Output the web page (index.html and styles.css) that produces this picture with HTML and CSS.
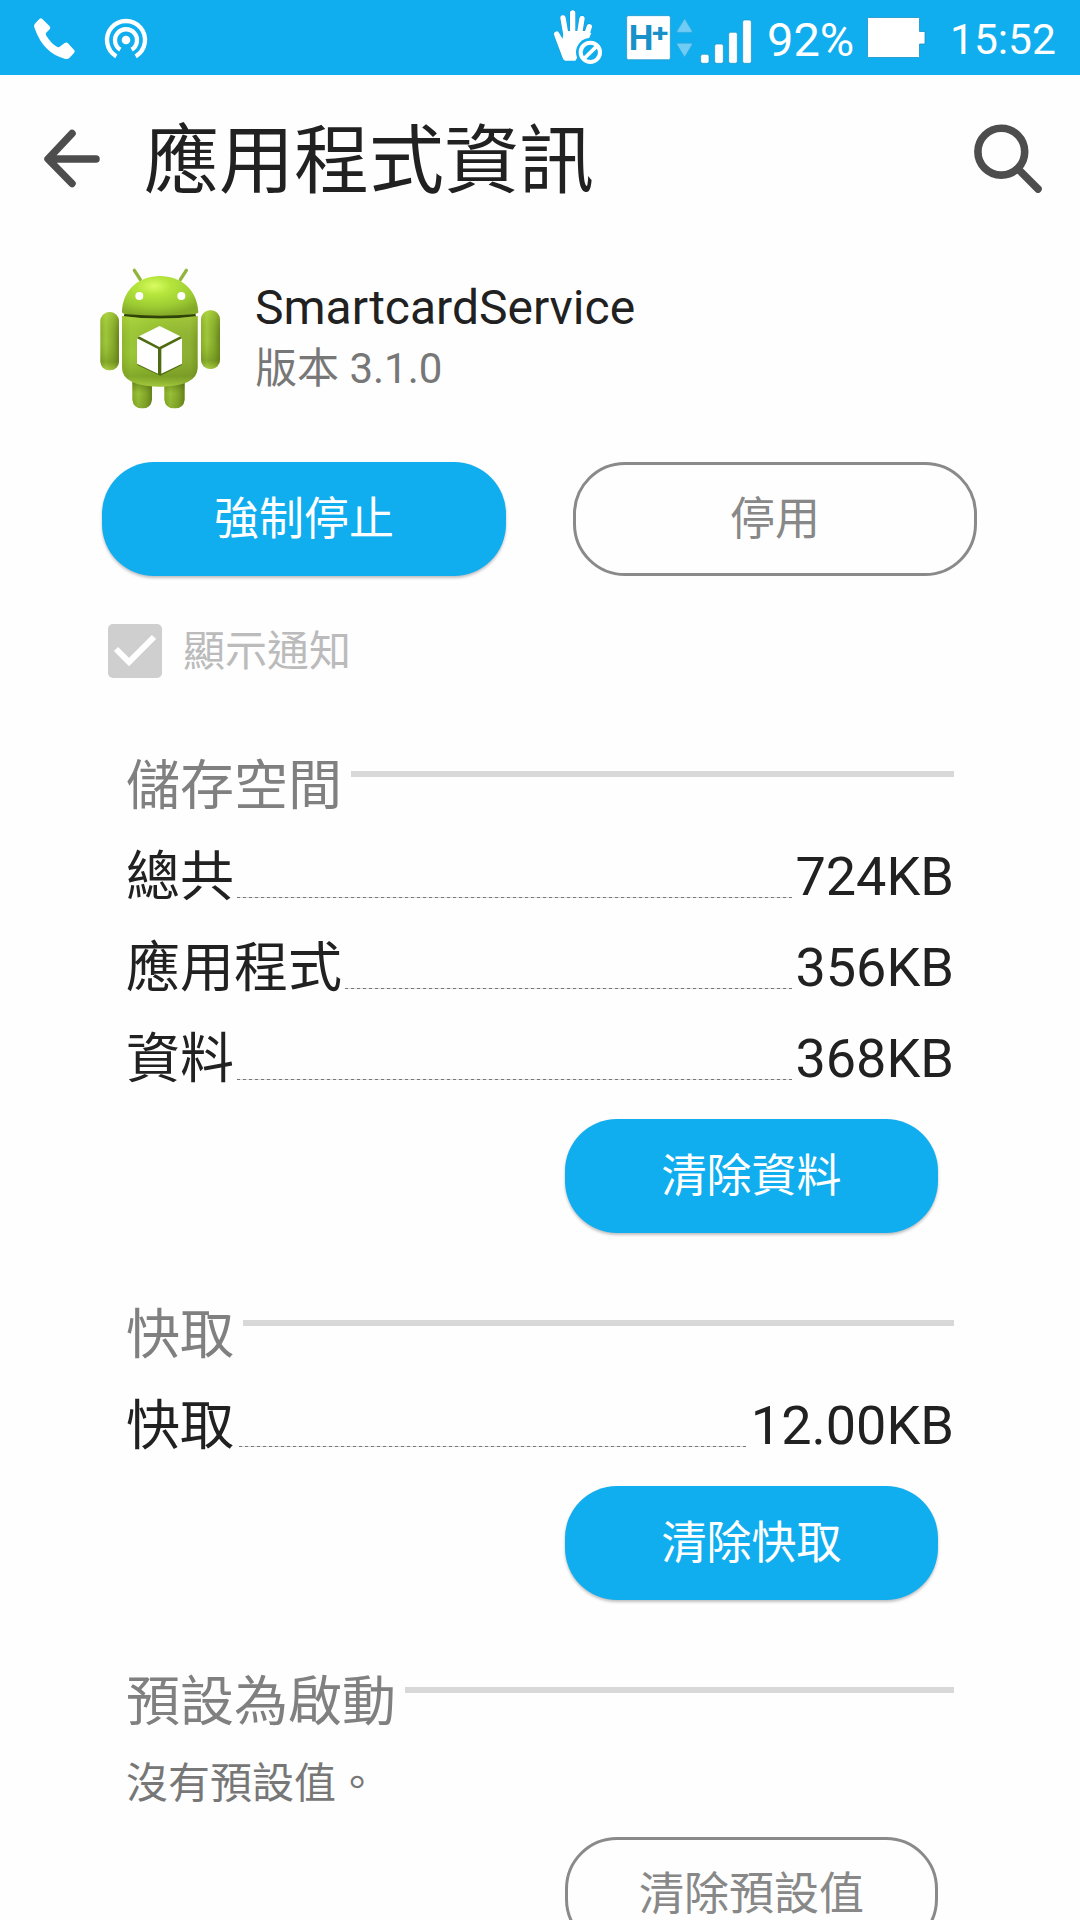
FILE: index.html
```html
<!DOCTYPE html>
<html lang="zh-Hant">
<head>
    <meta charset="UTF-8">
    <meta name="viewport" content="width=device-width, initial-scale=1.0">
    <title>應用程式資訊</title>
    <link rel="stylesheet" href="styles.css">
</head>
<body>
    <div class="statusbar">
        <svg class="phone" viewBox="96 48 135 135">
            <path fill="#fff" d="M118 57Q122 53 127 57L149 79Q153 84 149 88L138 99Q136 103 139 107Q154 131 172 141Q177 143 181 139L194 129Q200 126 204 130L223 151Q226 155 222 159L208 174Q203 179 194 176Q130 160 104 85Q100 77 104 72Z"/>
        </svg>
        <svg class="hotspot" viewBox="309 48 138 135">
            <g fill="none" stroke="#fff" stroke-width="13">
                <path d="M349 169A57 57 0 1 1 407 169"/>
                <path d="M361 149A33 33 0 1 1 395 149"/>
            </g>
            <circle cx="378" cy="120" r="13" fill="#fff"/>
        </svg>
        <svg class="signals" viewBox="36 20 603 180">
            <!-- hand -->
            <g fill="none" stroke="#1791c7" stroke-width="19" stroke-linecap="round" stroke-linejoin="round" opacity=".75">
                <path d="M50 101L75 170H105L125 125L147 79M69 53L79 110M98 38V110M126 55L117 110"/>
            </g>
            <g fill="none" stroke="#fff" stroke-width="16" stroke-linecap="round">
                <path d="M50 101L72 140M69 53L79 110M98 38V110M126 55L117 110M148 79L134 120"/>
            </g>
            <path fill="#fff" d="M57 101L67 116L74 92H136L154 98L140 130L106 181H76Q70 180 68 173L43 106Z"/>
            <circle cx="151" cy="156" r="43" fill="#10aeef"/>
            <circle cx="151" cy="156" r="29" fill="#10aeef" stroke="#fff" stroke-width="12"/>
            <path d="M134 173L169 139" stroke="#fff" stroke-width="11"/>
            <!-- network type -->
            <rect x="260" y="46" width="131" height="132" rx="5" fill="#fff" stroke="#1791c7" stroke-width="2"/>
            <text class="net" x="266" y="149" textLength="74" lengthAdjust="spacingAndGlyphs">H</text>
            <text class="net plus" x="336" y="125" textLength="49" lengthAdjust="spacingAndGlyphs">+</text>
            <path fill="#6fcdf5" stroke="#36a9dc" stroke-width="2" d="M434 55L456 92V96H411V92ZM434 170L456 133V129H411V133Z"/>
            <g fill="#fff" stroke="#1791c7" stroke-width="2">
                <rect x="482" y="162" width="25" height="27" rx="6"/>
                <rect x="524" y="131" width="26" height="58" rx="6"/>
                <rect x="566" y="96" width="26" height="93" rx="6"/>
                <rect x="608" y="59" width="26" height="130" rx="6"/>
            </g>
        </svg>
        <span class="percent">92%</span>
        <svg class="battery" viewBox="0 0 60 42">
            <path fill="#fff" stroke="#1791c7" stroke-width=".8" d="M1.5 .5H51.5Q52.5 .5 52.5 1.5V14.5H58V27H52.5V39.5Q52.5 40.5 51.5 40.5H1.5Q.5 40.5 .5 39.5V1.5Q.5 .5 1.5 .5Z"/>
        </svg>
        <span class="time">15:52</span>
    </div>

    <div class="header">
        <svg class="back" viewBox="0 0 60 60">
            <path fill="none" stroke="#4d4d4d" stroke-width="7.5" stroke-linecap="round" stroke-linejoin="round" d="M30 5.5L6 31L30 55.5M7 31H54"/>
        </svg>
        <h1>應用程式資訊</h1>
        <svg class="search" viewBox="0 0 70 70">
            <g fill="none" stroke="#4d4d4d" stroke-width="7.6" stroke-linecap="round">
                <circle cx="28.3" cy="28.7" r="23.4"/>
                <path d="M45 46L65 66"/>
            </g>
        </svg>
    </div>

    <div class="app">
        <svg class="robot" viewBox="0 0 450 495">
            <defs>
                <linearGradient id="body" x1="0" x2="1" y1="0" y2="0">
                    <stop offset="0" stop-color="#8fb52c"/>
                    <stop offset=".12" stop-color="#9cc739"/>
                    <stop offset=".5" stop-color="#90b92f"/>
                    <stop offset=".9" stop-color="#8db035"/>
                    <stop offset="1" stop-color="#789a22"/>
                </linearGradient>
                <linearGradient id="shade" x1="0" x2="0" y1="0" y2="1">
                    <stop offset="0" stop-color="#c8f04a" stop-opacity=".35"/>
                    <stop offset=".5" stop-color="#7fa51f" stop-opacity="0"/>
                    <stop offset=".85" stop-color="#5d7d14" stop-opacity=".4"/>
                    <stop offset="1" stop-color="#b7d84a" stop-opacity=".5"/>
                </linearGradient>
                <radialGradient id="head" cx=".42" cy=".25" r=".75">
                    <stop offset="0" stop-color="#d9fb62"/>
                    <stop offset=".3" stop-color="#b5e53c"/>
                    <stop offset=".7" stop-color="#9dcc33"/>
                    <stop offset="1" stop-color="#84ab28"/>
                </radialGradient>
                <linearGradient id="limb" x1="0" x2="1" y1="0" y2="0">
                    <stop offset="0" stop-color="#88ae2a"/>
                    <stop offset=".3" stop-color="#a0c83c"/>
                    <stop offset=".7" stop-color="#86a92c"/>
                    <stop offset="1" stop-color="#64831a"/>
                </linearGradient>
                <linearGradient id="leg" x1="0" x2="0" y1="0" y2="1">
                    <stop offset="0" stop-color="#3e5509" stop-opacity=".7"/>
                    <stop offset=".5" stop-color="#5d7d14" stop-opacity=".1"/>
                    <stop offset="1" stop-color="#5d7d14" stop-opacity=".3"/>
                </linearGradient>
            </defs>
            <path d="M148 46L166 74M304 46L286 74" stroke="#91b53a" stroke-width="10" stroke-linecap="round"/>
            <path fill="url(#limb)" d="M142 370H201V434Q198 460 172 460Q145 460 142 434Z"/>
            <path fill="url(#leg)" d="M142 370H201V434Q198 460 172 460Q145 460 142 434Z"/>
            <path fill="url(#limb)" d="M238 370H299V434Q296 460 269 460Q241 460 238 434Z"/>
            <path fill="url(#leg)" d="M238 370H299V434Q296 460 269 460Q241 460 238 434Z"/>
            <rect x="46" y="171" width="56" height="175" rx="27" fill="url(#limb)"/>
            <rect x="46" y="171" width="56" height="175" rx="27" fill="url(#shade)"/>
            <rect x="348" y="166" width="57" height="176" rx="27" fill="url(#limb)"/>
            <rect x="348" y="166" width="57" height="176" rx="27" fill="url(#shade)"/>
            <path fill="#2f4207" d="M119 174H331L334 192Q225 202 115 190Z"/>
            <path fill="url(#body)" d="M111 183Q225 198 338 183V338Q337 393 225 395Q112 393 111 338Z"/>
            <path fill="url(#shade)" d="M111 183Q225 198 338 183V338Q337 393 225 395Q112 393 111 338Z"/>
            <path fill="url(#head)" d="M111 172C112 105 162 63 225 63C288 63 338 105 340 172Q338 177 325 178Q225 186 125 178Q112 177 111 172Z"/>
            <circle cx="163" cy="123" r="12" fill="#fff"/>
            <circle cx="289" cy="123" r="12" fill="#fff"/>
            <path fill="#4e6b12" d="M222 217L290 248V330L226 362L157 330V248Z"/>
            <g fill="#fff">
                <path d="M224 213L286 244L223 276L162 244Z"/>
                <path d="M156 250L219 282V356L156 326Z"/>
                <path d="M229 282L291 250V326L229 356Z"/>
            </g>
        </svg>
        <div class="app-text">
            <div class="name">SmartcardService</div>
            <div class="version">版本 3.1.0</div>
        </div>
    </div>

    <div class="actions">
        <button class="btn primary">強制停止</button>
        <button class="btn outline">停用</button>
    </div>

    <div class="notify">
        <svg class="check" viewBox="0 0 54 54">
            <rect width="54" height="54" rx="5" fill="#cfcfcf"/>
            <path fill="none" stroke="#fff" stroke-width="6" d="M8 25L21 38L46 13"/>
        </svg>
        <span>顯示通知</span>
    </div>

    <div class="section">
        <div class="row title"><span class="label">儲存空間</span><i class="line"></i></div>
        <div class="row"><span class="label">總共</span><i class="dots"></i><span>724KB</span></div>
        <div class="row"><span class="label">應用程式</span><i class="dots"></i><span>356KB</span></div>
        <div class="row"><span class="label">資料</span><i class="dots"></i><span>368KB</span></div>
        <button class="btn primary">清除資料</button>
    </div>

    <div class="section">
        <div class="row title"><span class="label">快取</span><i class="line"></i></div>
        <div class="row cache"><span class="label">快取</span><i class="dots"></i><span>12.00KB</span></div>
        <button class="btn primary">清除快取</button>
    </div>

    <div class="section">
        <div class="row title"><span class="label">預設為啟動</span><i class="line"></i></div>
        <p class="empty">沒有預設值。</p>
        <button class="btn outline">清除預設值</button>
    </div>
</body>
</html>
```
FILE: styles.css
```css
* {
    box-sizing: border-box;
}

body {
    margin: 0;
    width: 1080px;
    height: 1920px;
    overflow: hidden;
    background-color: #fefefe;
    color: #212121;
    font-family: Roboto, "Noto Sans CJK TC", sans-serif;
}

svg {
    display: block;
    flex: none;
}

/* status bar */
.statusbar {
    display: flex;
    height: 75px;
    background-color: #10aeef;
    color: #fff;
}
.phone {
    width: 45px;
    height: 45px;
    margin: 16px 0 0 32px;
}
.hotspot {
    width: 46px;
    height: 45px;
    margin: 16px 0 0 26px;
}
.signals {
    width: 201px;
    height: 60px;
    margin: 7px 0 0 403px;
}
.net {
    fill: #1791c7;
    font-size: 104px;
    font-weight: bold;
}
.plus {
    font-size: 76px;
}
.percent {
    width: 100px;
    padding-left: 14px;
    font-size: 47px;
    line-height: 79px;
    white-space: nowrap;
}
.battery {
    width: 60px;
    height: 42px;
    margin: 17px 0 0 14px;
}
.time {
    margin-left: 23px;
    font-size: 42.5px;
    line-height: 79px;
}

/* title bar */
.header {
    display: flex;
    height: 162px;
}
.back {
    width: 60px;
    height: 60px;
    margin: 53px 0 0 42px;
}
.header h1 {
    flex: 1;
    margin: 0 0 0 42px;
    padding-top: 7px;
    font-size: 75px;
    font-weight: normal;
    line-height: 158px;
}
.search {
    width: 70px;
    height: 70px;
    margin: 48px 37px 0 0;
}

/* app name */
.app {
    display: flex;
    padding: 18px 0 0 85px;
}
.robot {
    width: 150px;
    height: 165px;
}
.app-text {
    padding: 24px 0 0 20px;
}
.name {
    font-size: 48px;
    line-height: 58px;
}
.version {
    color: #777;
    font-size: 42px;
    line-height: 63px;
}

.btn {
    display: block;
    height: 114px;
    padding: 1px 0 0;
    border: none;
    border-radius: 52px;
    font-family: inherit;
    font-size: 45px;
    line-height: 1;
}
.primary {
    background-color: #10aeef;
    color: #fff;
    box-shadow: 0 2px 3px rgba(0, 0, 0, 0.25);
}
.outline {
    background: none;
    border: 3px solid #8a8a8a;
    color: #888;
}

.actions {
    display: flex;
    gap: 67px;
    margin: 42px 0 0 102px;
}
.actions .btn {
    width: 404px;
}

.notify {
    display: flex;
    height: 54px;
    margin: 48px 0 59px 108px;
    color: #bbb;
    font-size: 42px;
    line-height: 55px;
}
.check {
    width: 54px;
    height: 54px;
    margin-right: 21px;
}

/* storage, cache, defaults */
.section {
    margin: 0 126px 53px;
}
.row {
    display: flex;
    height: 91px;
    font-size: 54px;
}
.row span {
    padding-top: 6px;
    line-height: 85px;
}
.row .label {
    padding-top: 7px;
}
.title {
    color: #808080;
}
.line {
    flex: 1;
    height: 6px;
    margin: 34px 0 0 9px;
    background-color: #d8d8d9;
}
.dots {
    flex: 1;
    height: 1px;
    margin: 69px 3px 0;
    background: repeating-linear-gradient(90deg, #777 0 3px, #ddd 3px 6px);
}
.cache .dots {
    margin: 69px 5px 0;
}
.section .btn {
    width: 373px;
    margin: 18px 16px 0 auto;
}
.empty {
    height: 75px;
    margin: 0;
    color: #777;
    font-size: 42px;
    line-height: 79px;
}
```
